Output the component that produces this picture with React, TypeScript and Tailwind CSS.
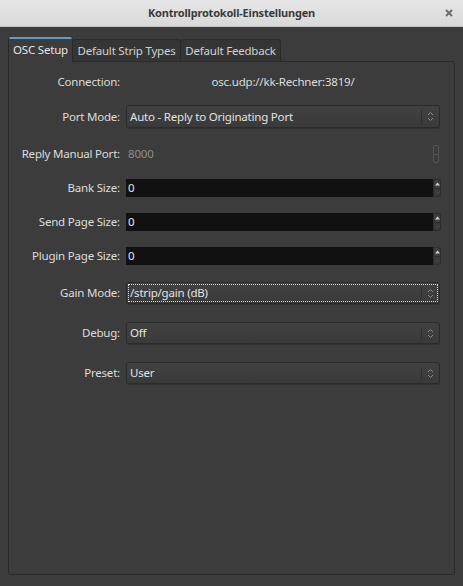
import React from 'react';

const font = { fontFamily: '"Noto Sans", "Open Sans", sans-serif' };

// up/down chevrons used in combo boxes
const UpDown: React.FC = () => (
  <svg width="7" height="11" viewBox="0 0 7 11" className="text-[#8a8a8a]">
    <path d="M1 4 L3.5 1.5 L6 4" fill="none" stroke="currentColor" strokeWidth="1" />
    <path d="M1 7 L3.5 9.5 L6 7" fill="none" stroke="currentColor" strokeWidth="1" />
  </svg>
);

const Combo: React.FC<{ value: string; focused?: boolean }> = ({ value, focused }) => (
  <div className="relative flex h-full w-[314px] items-center rounded-[3px] border border-[#2b2b2b] bg-gradient-to-b from-[#414141] to-[#3a3a3a] shadow-[0_1px_0_#333]">
    <span className="flex-1 pl-[3px] text-[#e2e2e2]">{value}</span>
    <div className="my-[4px] h-[calc(100%-8px)] w-px bg-[#2e2e2e]" />
    <div className="flex w-[17px] items-center justify-center">
      <UpDown />
    </div>
    {focused && (
      <div className="pointer-events-none absolute inset-[1px] border border-dotted border-[#d8d8d8]" />
    )}
  </div>
);

const SpinInput: React.FC<{ value: string }> = ({ value }) => (
  <div className="flex h-full w-[315px]">
    <div className="flex flex-1 items-center bg-[#111111] pl-[2px] text-[#e6e6e6]">{value}</div>
    <div className="flex w-[8px] flex-col">
      <div className="flex h-1/2 items-center justify-center rounded-tr-[3px] border border-b-0 border-[#2c2c2c] bg-[#3e3e3e]">
        <svg width="5" height="4" viewBox="0 0 5 4"><path d="M0 3.5 L2.5 0.5 L5 3.5 Z" fill="#cfcfcf" /></svg>
      </div>
      <div className="flex h-1/2 items-center justify-center rounded-br-[3px] border border-[#2c2c2c] bg-[#393939]">
        <svg width="5" height="4" viewBox="0 0 5 4"><path d="M0.5 0.5 L2.5 3 L4.5 0.5" fill="none" stroke="#4a4a4a" strokeWidth="1" /></svg>
      </div>
    </div>
  </div>
);

const Row: React.FC<{ label: string; h: string; mt: string; children: React.ReactNode }> = ({ label, h, mt, children }) => (
  <div className={`flex items-center ${h} ${mt}`}>
    <div className="w-[111px] shrink-0 text-right text-[#dcdcdc]">{label}</div>
    <div className="ml-[6px] flex h-full items-center">{children}</div>
  </div>
);

const App: React.FC = () => {
  return (
    <div className="flex h-[586px] w-[463px] flex-col bg-[#3c3c3c] text-[11.5px] tracking-[-0.2px]" style={font}>
      {/* title bar */}
      <div className="relative flex h-[27px] shrink-0 items-center justify-center bg-gradient-to-b from-[#e6e6e6] to-[#d9d9d9] border-b border-[#c4c4c4]">
        <span className="text-[11px] font-bold text-[#3b3b3b]">Kontrollprotokoll-Einstellungen</span>
        <svg className="absolute right-[10px] top-[9px]" width="8" height="8" viewBox="0 0 8 8">
          <path d="M1 1 L7 7 M7 1 L1 7" stroke="#6e6e6e" strokeWidth="2" />
        </svg>
      </div>

      {/* tabs */}
      <div className="ml-[8px] mt-[10px] flex h-[25px] items-end">
        <div className="relative z-10 flex h-[25px] w-[65px] items-center justify-center rounded-t-[3px] border border-b-0 border-[#2a2a2a] bg-[#3c3c3c] text-[#e4e4e4]">
          <div className="absolute -top-px left-0 right-0 h-[2px] rounded-t-[3px] bg-[#5e9ccc]" />
          OSC Setup
        </div>
        <div className="flex h-[23px] w-[108px] items-center justify-center rounded-t-[3px] border border-b-0 border-l-0 border-[#2a2a2a] bg-[#353535] text-[#d0d0d0]">
          Default Strip Types
        </div>
        <div className="flex h-[23px] w-[100px] items-center justify-center rounded-t-[3px] border border-b-0 border-l-0 border-[#2a2a2a] bg-[#353535] text-[#d0d0d0]">
          Default Feedback
        </div>
      </div>

      {/* panel */}
      <div className="-mt-px ml-[8px] flex h-[514px] w-[447px] flex-col rounded-b-[3px] rounded-tr-[3px] border border-[#2a2a2a] bg-[#3c3c3c]">
        <Row label="Connection:" h="h-[20px]" mt="mt-[10px]">
          <div className="w-[314px] text-center text-[#dcdcdc]">osc.udp://kk-Rechner:3819/</div>
        </Row>
        <Row label="Port Mode:" h="h-[23px]" mt="mt-[13px]">
          <Combo value="Auto - Reply to Originating Port" />
        </Row>
        <Row label="Reply Manual Port:" h="h-[18px]" mt="mt-[17px]">
          <div className="flex h-full w-[315px] items-center">
            <span className="flex-1 pl-[2px] text-[#8c8c8c]">8000</span>
            <div className="mr-[2px] flex h-full w-[6px] flex-col">
              <div className="h-1/2 rounded-t-[2px] border border-b-0 border-[#555]" />
              <div className="h-1/2 rounded-b-[2px] border border-[#555]" />
            </div>
          </div>
        </Row>
        <Row label="Bank Size:" h="h-[18px]" mt="mt-[16px]">
          <SpinInput value="0" />
        </Row>
        <Row label="Send Page Size:" h="h-[18px]" mt="mt-[16px]">
          <SpinInput value="0" />
        </Row>
        <Row label="Plugin Page Size:" h="h-[18px]" mt="mt-[16px]">
          <SpinInput value="0" />
        </Row>
        <Row label="Gain Mode:" h="h-[22px]" mt="mt-[17px]">
          <Combo value="/strip/gain (dB)" focused />
        </Row>
        <Row label="Debug:" h="h-[22px]" mt="mt-[18px]">
          <Combo value="Off" />
        </Row>
        <Row label="Preset:" h="h-[22px]" mt="mt-[18px]">
          <Combo value="User" />
        </Row>
      </div>
    </div>
  );
};

export default App;
